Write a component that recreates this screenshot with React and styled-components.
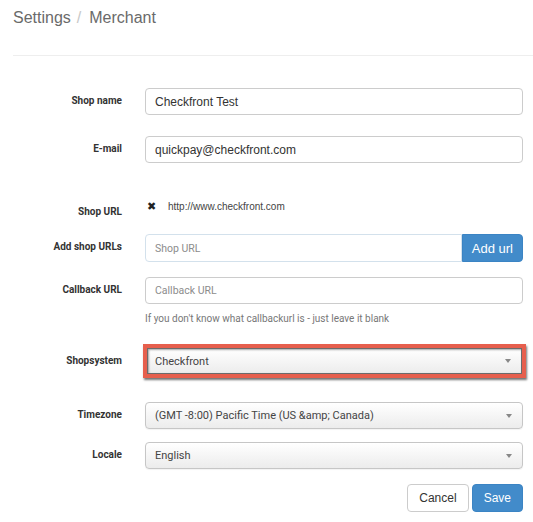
import React from 'react';
import styled, { createGlobalStyle } from 'styled-components';

const GlobalStyle = createGlobalStyle`
  body {
    margin: 0;
    background: #fff;
    font-family: 'Liberation Sans', Arial, sans-serif;
  }
`;

const Page = styled.div`
  width: 520px;
  padding-left: 13px;
`;

const Breadcrumb = styled.h1`
  margin: 0;
  padding-top: 8px;
  font-size: 16px;
  line-height: 20px;
  font-weight: normal;
  color: #6a6a6a;
`;

const Divider = styled.span`
  color: #c8c8c8;
  margin: 0 8px 0 6px;
`;

const Rule = styled.hr`
  margin: 27px 0 0;
  border: 0;
  border-top: 1px solid #eeeeee;
`;

const Form = styled.form`
  padding-right: 10px;
`;

const Row = styled.div`
  display: grid;
  grid-template-columns: 109px 1fr;
  column-gap: 23px;
  align-items: start;
  margin-top: ${p => p.$mt}px;
`;

const Label = styled.label`
  font-family: Roboto, 'Liberation Sans', sans-serif;
  font-weight: 700;
  font-size: 10px;
  color: #333;
  text-align: right;
  line-height: ${p => (p.$h || 27) - 2}px;
  padding-top: ${p => p.$pt || 0}px;
`;

const Input = styled.div`
  box-sizing: border-box;
  height: ${p => p.$h || 27}px;
  border: 1px solid ${p => p.$soft ? '#d3e1ec' : '#cccccc'};
  border-radius: ${p => p.$attached ? '4px 0 0 4px' : '4px'};
  padding: 0 9px;
  display: flex;
  align-items: center;
  font-size: 12px;
  color: #333;
  flex: 1;
  min-width: 0;
`;

const Placeholder = styled.span`
  font-family: Roboto, 'Liberation Sans', sans-serif;
  font-size: 10.5px;
  color: #8c8c8c;
`;

const InputGroup = styled.div`
  display: flex;
`;

const Button = styled.button`
  box-sizing: border-box;
  height: 28px;
  padding: 0 ${p => p.$px || 11}px;
  font-family: 'Liberation Sans', Arial, sans-serif;
  font-size: ${p => p.$fs || 12}px;
  border-radius: ${p => p.$attached ? '0 4px 4px 0' : '4px'};
  border: 1px solid ${p => p.$primary ? '#3b84c4' : '#cccccc'};
  background: ${p => p.$primary ? '#428bca' : '#fff'};
  color: ${p => p.$primary ? '#fff' : '#333'};
  cursor: pointer;
`;

const UrlLine = styled.div`
  display: flex;
  align-items: center;
  gap: 12px;
  height: 16px;
  font-size: 10px;
  color: #444;
  padding-left: 2px;
`;

const RemoveIcon = styled.span`
  font-size: 11px;
  color: #222;
  line-height: 1;
`;

const Help = styled.p`
  margin: 0;
  font-family: Roboto, 'Liberation Sans', sans-serif;
  font-size: 10px;
  line-height: 14px;
  color: #777;
`;

const Highlight = styled.div`
  margin: 0 -3px 0 -2px;
  border: 4px solid #e65f4d;
  box-shadow: 1px 2px 2px rgba(0, 0, 0, 0.55);
`;

const Select = styled.div`
  box-sizing: border-box;
  height: ${p => p.$h || 27}px;
  border: 1px solid ${p => p.$dark ? '#6b6b6b' : '#c6c6c6'};
  border-radius: ${p => p.$dark ? '0' : '4px'};
  background: linear-gradient(#ffffff, #ececec);
  box-shadow: ${p => p.$dark ? 'inset 1px 1px 2px rgba(0,0,0,0.35)' : '0 1px 1px rgba(0,0,0,0.05)'};
  padding: 0 10px 0 ${p => p.$dark ? 7 : 9}px;
  display: flex;
  align-items: center;
  justify-content: space-between;
  font-family: Roboto, 'Liberation Sans', sans-serif;
  font-size: 11px;
  color: #444;
`;

const Caret = styled.span`
  width: 0;
  height: 0;
  border-left: 3px solid transparent;
  border-right: 3px solid transparent;
  border-top: 4px solid #888;
`;

const Actions = styled.div`
  display: flex;
  justify-content: flex-end;
  gap: 3px;
  margin-top: 15px;
`;

export default function App() {
  return (
    <Page>
      <GlobalStyle />
      <Breadcrumb>
        Settings<Divider>/</Divider>Merchant
      </Breadcrumb>
      <Rule />
      <Form>
        <Row $mt={32}>
          <Label>Shop name</Label>
          <Input>Checkfront Test</Input>
        </Row>
        <Row $mt={21}>
          <Label>E-mail</Label>
          <Input>quickpay@checkfront.com</Input>
        </Row>
        <Row $mt={35}>
          <Label $h={15} $pt={7}>Shop URL</Label>
          <UrlLine>
            <RemoveIcon>✖</RemoveIcon>
            http://www.checkfront.com
          </UrlLine>
        </Row>
        <Row $mt={16}>
          <Label $h={28}>Add shop URLs</Label>
          <InputGroup>
            <Input $h={28} $soft $attached>
              <Placeholder>Shop URL</Placeholder>
            </Input>
            <Button $primary $attached $px={9} $fs={13}>Add url</Button>
          </InputGroup>
        </Row>
        <Row $mt={15}>
          <Label>Callback URL</Label>
          <Input>
            <Placeholder>Callback URL</Placeholder>
          </Input>
        </Row>
        <Row $mt={8}>
          <span />
          <Help>If you don't know what callbackurl is - just leave it blank</Help>
        </Row>
        <Row $mt={18}>
          <Label $h={35}>Shopsystem</Label>
          <Highlight>
            <Select $h={26} $dark>
              Checkfront
              <Caret />
            </Select>
          </Highlight>
        </Row>
        <Row $mt={24}>
          <Label>Timezone</Label>
          <Select>
            (GMT -8:00) Pacific Time (US &amp;amp; Canada)
            <Caret />
          </Select>
        </Row>
        <Row $mt={13}>
          <Label>Locale</Label>
          <Select>
            English
            <Caret />
          </Select>
        </Row>
        <Actions>
          <Button type="button">Cancel</Button>
          <Button type="button" $primary>Save</Button>
        </Actions>
      </Form>
    </Page>
  );
}
